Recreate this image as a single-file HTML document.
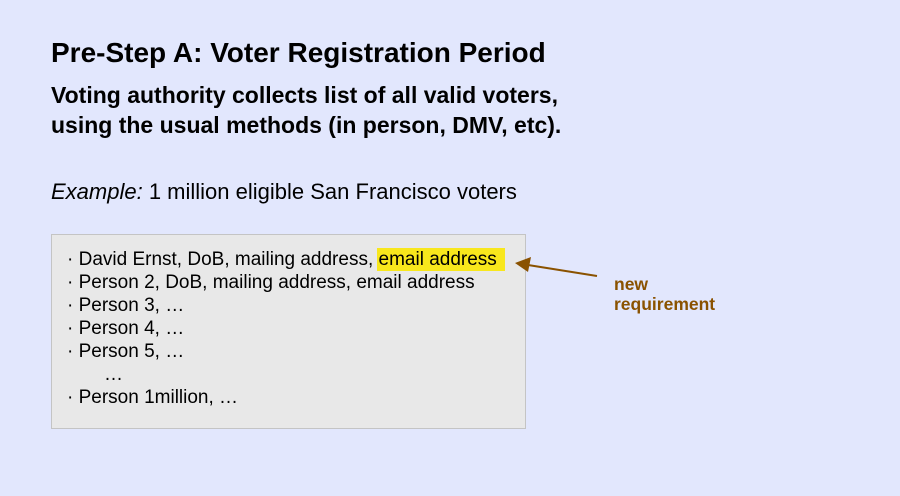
<!DOCTYPE html>
<html><head><style>
body{margin:0;width:900px;height:496px;background:#e2e7fd;font-family:"Liberation Sans",sans-serif;position:relative;overflow:hidden}
.a{position:absolute;white-space:nowrap}
</style></head><body>
<div class="a" style="left:51px;top:37px;font-size:28px;font-weight:bold;color:#000">Pre-Step A: Voter Registration Period</div>
<div class="a" style="left:51px;top:80px;font-size:23px;font-weight:bold;line-height:30px;color:#000">Voting authority collects list of all valid voters,<br>using the usual methods (in person, DMV, etc).</div>
<div class="a" style="left:51px;top:179px;font-size:22px;color:#000"><i>Example:</i> 1 million eligible San Francisco voters</div>
<div class="a" style="left:51px;top:234px;width:473px;height:193px;background:#e8e8e8;border:1px solid #c4c4c4"></div>
<div class="a" style="left:67px;top:248px;font-size:19px;line-height:23px;color:#000">
· David Ernst, DoB, mailing address, <span style="background:#f8e71c;padding:1px 8px 1px 2px;margin-left:-2px">email address</span><br>
· Person 2, DoB, mailing address, email address<br>
· Person 3, …<br>
· Person 4, …<br>
· Person 5, …<br>
&nbsp;&nbsp;&nbsp;&nbsp;&nbsp;&nbsp;&nbsp;…<br>
· Person 1million, …</div>
<svg class="a" style="left:0;top:0" width="900" height="496"><line x1="597" y1="276" x2="528" y2="265" stroke="#8a5200" stroke-width="2"/><polygon points="515,263 531,257 528,272" fill="#8a5200"/></svg>
<div class="a" style="left:614px;top:274px;font-size:17.5px;font-weight:bold;line-height:20px;color:#8a5200">new<br>requirement</div>
</body></html>
